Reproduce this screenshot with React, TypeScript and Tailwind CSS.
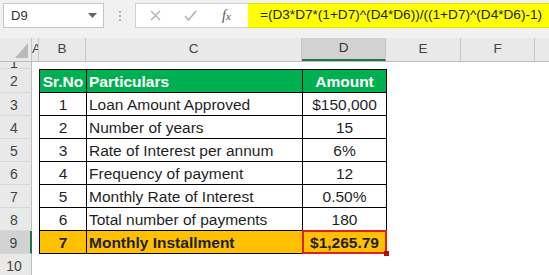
import React from "react";

const rows = [
  { n: "3", b: "1", c: "Loan Amount Approved", d: "$150,000" },
  { n: "4", b: "2", c: "Number of years", d: "15" },
  { n: "5", b: "3", c: "Rate of Interest per annum", d: "6%" },
  { n: "6", b: "4", c: "Frequency of payment", d: "12" },
  { n: "7", b: "5", c: "Monthly Rate of Interest", d: "0.50%" },
  { n: "8", b: "6", c: "Total number of payments", d: "180" },
];

function RowHdr({ n, h, sel }: { n: string; h: string; sel?: boolean }) {
  return (
    <div
      className={
        "w-[32px] shrink-0 flex items-center justify-center pt-[2px] text-[14px] text-[#444] border-b border-[#d8d8d8] " +
        h +
        (sel ? " bg-[#d2d2d2] border-r-2 border-r-[#217346]" : " bg-[#e9e9e9] border-r border-r-[#bdbdbd]")
      }
    >
      <span className="pr-[3px]">{n}</span>
    </div>
  );
}

export default function App() {
  return (
    <div
      className="w-[549px] h-[275px] overflow-hidden bg-white text-[#1f1f1f]"
      style={{ fontFamily: '"Liberation Sans", Arial, sans-serif' }}
    >
      {/* formula bar */}
      <div className="h-[38px] bg-[#f1f1f1] flex items-start pt-[3px]">
        <div className="ml-[3px] w-[101px] h-[25px] bg-white border border-[#c6c6c6] flex items-center justify-between pl-[7px] pr-[6px]">
          <span className="text-[13px] text-[#333]">D9</span>
          <svg width="9" height="5" viewBox="0 0 9 5">
            <path d="M0 0 L9 0 L4.5 5 Z" fill="#666" />
          </svg>
        </div>
        <div className="w-[31px] h-[25px] flex flex-col items-center justify-center gap-[2px]">
          <div className="w-[2px] h-[2px] bg-[#b5b5b5]" />
          <div className="w-[2px] h-[2px] bg-[#b5b5b5]" />
          <div className="w-[2px] h-[2px] bg-[#b5b5b5]" />
        </div>
        <div className="w-[113px] h-[25px] bg-white border border-[#d0d0d0] border-r-0 flex items-center">
          <div className="w-[36px] flex justify-center pl-[2px]">
            <svg width="11" height="11" viewBox="0 0 11 11">
              <path d="M1 1 L10 10 M10 1 L1 10" stroke="#b3b3b3" strokeWidth="1.4" />
            </svg>
          </div>
          <div className="w-[36px] flex justify-center">
            <svg width="13" height="11" viewBox="0 0 13 11">
              <path d="M1 6 L4.5 10 L12 1" stroke="#b3b3b3" strokeWidth="1.6" fill="none" />
            </svg>
          </div>
          <div
            className="w-[37px] flex justify-center text-[14px] italic text-[#555]"
            style={{ fontFamily: '"Liberation Serif", serif' }}
          >
            <span>
              f<span className="text-[11px]">x</span>
            </span>
          </div>
        </div>
        <div className="flex-1 h-[25px] bg-[#ffff00] border-y border-[#e4e400] flex items-center pl-[12px] text-[13.6px] text-[#222] whitespace-nowrap">
          =(D3*D7*(1+D7)^(D4*D6))/((1+D7)^(D4*D6)-1)
        </div>
      </div>

      {/* column headers */}
      <div className="flex h-[24px] bg-[#e9e9e9] border-b border-[#bdbdbd] text-[13.5px] text-[#444]">
        <div className="w-[32px] shrink-0 relative border-r border-[#c6c6c6]">
          <svg className="absolute left-[15px] top-[5px]" width="13" height="15" viewBox="0 0 13 15">
            <path d="M13 0 L13 15 L0 15 Z" fill="#b9b9b9" />
          </svg>
        </div>
        <div className="w-[7px] shrink-0 overflow-hidden border-r border-[#c6c6c6] flex items-center">
          <span>A</span>
        </div>
        <div className="w-[47px] shrink-0 border-r border-[#c6c6c6] flex items-center justify-center">B</div>
        <div className="w-[216px] shrink-0 border-r border-[#c6c6c6] flex items-center justify-center">C</div>
        <div className="w-[84px] shrink-0 bg-[#d2d2d2] border-r border-[#c6c6c6] border-b-2 border-b-[#217346] flex items-center justify-center text-[#333]">
          D
        </div>
        <div className="w-[75px] shrink-0 border-r border-[#c6c6c6] flex items-center justify-center">E</div>
        <div className="w-[74px] shrink-0 border-r border-[#c6c6c6] flex items-center justify-center">F</div>
        <div className="flex-1" />
      </div>

      {/* row 1 (collapsed) */}
      <div className="flex h-[7px]">
        <div className="w-[32px] shrink-0 bg-[#e9e9e9] border-r border-[#bdbdbd] border-b border-b-[#d8d8d8] overflow-hidden relative">
          <span className="absolute left-[10px] -top-[9px] text-[14px] text-[#444]">1</span>
        </div>
      </div>

      <div className="text-[15.5px]">
        {/* row 2 header */}
        <div className="flex">
          <RowHdr n="2" h="h-[24px]" />
          <div className="w-[7px] shrink-0" />
          <div className="w-[47px] shrink-0 h-[24px] bg-[#00b050] border border-black border-r-0 flex items-center justify-center pt-[2px] font-bold text-white">
            Sr.No
          </div>
          <div className="w-[216px] shrink-0 h-[24px] bg-[#00b050] border border-black border-r-0 flex items-center pl-[2px] pt-[2px] font-bold text-white">
            Particulars
          </div>
          <div className="w-[85px] shrink-0 h-[24px] bg-[#00b050] border border-black flex items-center justify-center pt-[2px] font-bold text-white">
            Amount
          </div>
        </div>
        {rows.map((r) => (
          <div className="flex" key={r.n}>
            <RowHdr n={r.n} h="h-[23px]" />
            <div className="w-[7px] shrink-0" />
            <div className="w-[47px] shrink-0 h-[23px] border-l border-b border-black flex items-center justify-center pt-[2px]">
              {r.b}
            </div>
            <div className="w-[216px] shrink-0 h-[23px] border-l border-b border-black flex items-center pl-[2px] pt-[2px] whitespace-nowrap">
              {r.c}
            </div>
            <div className="w-[85px] shrink-0 h-[23px] border-x border-b border-black flex items-center justify-center pt-[2px]">
              {r.d}
            </div>
          </div>
        ))}
        {/* row 9 */}
        <div className="flex">
          <RowHdr n="9" h="h-[23px]" sel />
          <div className="w-[7px] shrink-0" />
          <div className="w-[47px] shrink-0 h-[23px] bg-[#ffc000] border-l border-b border-black flex items-center justify-center pt-[2px] font-bold">
            7
          </div>
          <div className="w-[216px] shrink-0 h-[23px] bg-[#ffc000] border-l border-b border-black flex items-center pl-[2px] pt-[2px] font-bold whitespace-nowrap">
            Monthly Installment
          </div>
          <div className="w-[85px] shrink-0 h-[23px] bg-[#ffc000] border-x border-b border-black flex items-center justify-center pt-[2px] font-bold relative">
            $1,265.79
            <div className="absolute -left-[1px] -top-[1px] -right-[1px] -bottom-[1px] border-2 border-[#e0201a]" />
            <div className="absolute -right-[3px] -bottom-[3px] w-[5px] h-[5px] bg-[#b01010]" />
          </div>
        </div>
        {/* row 10 */}
        <div className="flex">
          <RowHdr n="10" h="h-[23px]" />
        </div>
      </div>
    </div>
  );
}
